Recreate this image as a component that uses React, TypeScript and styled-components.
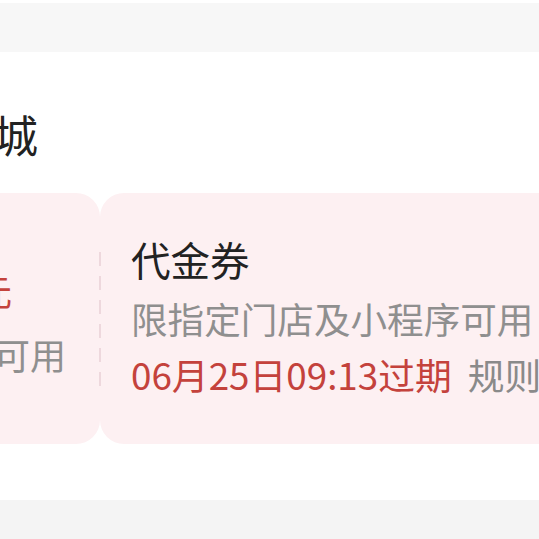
import React from "react";
import styled, { createGlobalStyle } from "styled-components";

const Global = createGlobalStyle`
  html, body {
    margin: 0;
    padding: 0;
    background: #ffffff;
    overflow: hidden;
  }
  body {
    font-family: "Noto Sans CJK SC", "Noto Sans", sans-serif;
    width: 539px;
    height: 539px;
  }
`;

const Page = styled.div`
  width: 539px;
  height: 539px;
  overflow: hidden;
  display: flex;
  flex-direction: column;
  background: #ffffff;
  padding-top: 3px;
  box-sizing: border-box;
`;

const TopBand = styled.div`
  height: 49px;
  flex: none;
  background: #f7f7f7;
`;

const Section = styled.section`
  flex: none;
  height: 448px;
  background: #ffffff;
  padding-top: 60px;
  box-sizing: border-box;
  margin-left: -132px;
  display: flex;
  flex-direction: column;
`;

const Heading = styled.h2`
  margin: 0 0 0 -6px;
  font-size: 44px;
  line-height: 44px;
  font-weight: 400;
  color: #222222;
  white-space: nowrap;
`;

const Coupon = styled.div`
  margin-top: 37px;
  height: 251px;
  display: flex;
  width: 900px;
`;

const Stub = styled.div`
  position: relative;
  width: 232px;
  flex: none;
  background: #fdf0f2;
  border-radius: 24px;
  display: flex;
  flex-direction: column;
  align-items: center;
  padding-top: 79px;
  box-sizing: border-box;
  &::after {
    content: "";
    position: absolute;
    right: -1px;
    top: 59px;
    width: 2px;
    height: 134px;
    background: repeating-linear-gradient(
      to bottom,
      #eed8dd 0,
      #eed8dd 14px,
      transparent 14px,
      transparent 24px
    );
    z-index: 1;
  }
`;

const Amount = styled.div`
  font-size: 36px;
  line-height: 36px;
  color: #c4423c;
  white-space: nowrap;
`;

const Condition = styled.div`
  margin-top: 28px;
  font-size: 36px;
  line-height: 36px;
  color: #8f8f8f;
  white-space: nowrap;
`;

const Body = styled.div`
  flex: 1;
  background: #fdf0f2;
  border-radius: 24px;
  padding: 46px 0 0 31px;
  box-sizing: border-box;
  display: flex;
  flex-direction: column;
`;

const Title = styled.div`
  font-size: 39.5px;
  line-height: 40px;
  color: #222222;
  white-space: nowrap;
`;

const Desc = styled.div`
  margin-top: 21px;
  font-size: 36.6px;
  line-height: 37px;
  color: #8f8f8f;
  white-space: nowrap;
`;

const Meta = styled.div`
  margin-top: 19px;
  font-size: 36.8px;
  line-height: 37px;
  white-space: nowrap;
  display: flex;
  gap: 16px;
`;

const Expire = styled.span`
  color: #c4423c;
`;

const Rule = styled.span`
  color: #8a8a8a;
`;

const BottomBand = styled.div`
  flex: 1;
  background: #f4f4f4;
`;

export default function App() {
  return (
    <>
      <Global />
      <Page>
        <TopBand />
        <Section>
          <Heading>优惠商城</Heading>
          <Coupon>
            <Stub>
              <Amount>5元</Amount>
              <Condition>满9元可用</Condition>
            </Stub>
            <Body>
              <Title>代金券</Title>
              <Desc>限指定门店及小程序可用</Desc>
              <Meta>
                <Expire>06月25日09:13过期</Expire>
                <Rule>规则</Rule>
              </Meta>
            </Body>
          </Coupon>
        </Section>
        <BottomBand />
      </Page>
    </>
  );
}
